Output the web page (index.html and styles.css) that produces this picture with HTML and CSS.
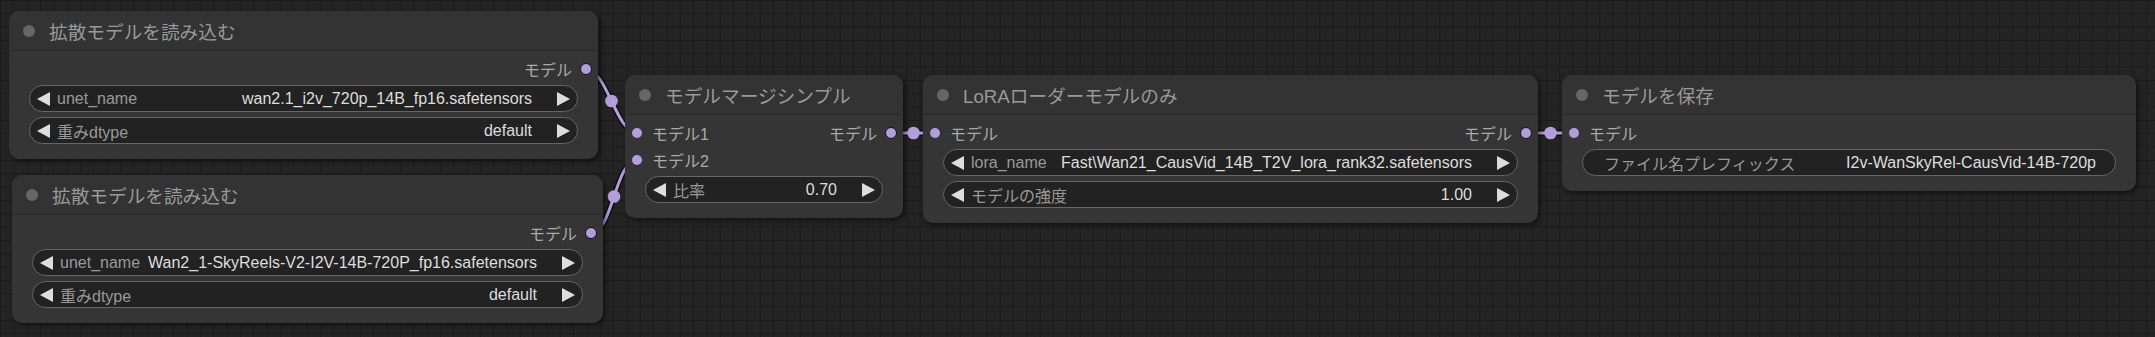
FILE: index.html
```html
<!DOCTYPE html>
<html lang="ja">
<head>
    <meta charset="UTF-8">
    <title>ComfyUI - モデルマージ</title>
    <link rel="stylesheet" href="styles.css">
</head>
<body>
<div class="canvas">
    <!-- links between nodes -->
    <svg class="links" width="2155" height="337" viewBox="0 0 2155 337">
        <g class="link-shadow">
            <path d="M586 69 C606.5 69 616.5 133 637 133"/>
            <path d="M591 233 C612.6 233 615.4 160 637 160"/>
            <path d="M891 133 L936 133"/>
            <path d="M1526.5 133 L1574.5 133"/>
        </g>
        <g class="link-line">
            <path d="M586 69 C606.5 69 616.5 133 637 133"/>
            <path d="M591 233 C612.6 233 615.4 160 637 160"/>
            <path d="M891 133 L936 133"/>
            <path d="M1526.5 133 L1574.5 133"/>
        </g>
        <g class="link-marker">
            <circle cx="611.5" cy="101" r="6.3"/>
            <circle cx="614" cy="196.5" r="6.3"/>
            <circle cx="913.5" cy="133" r="6.3"/>
            <circle cx="1550.5" cy="133" r="6.3"/>
        </g>
    </svg>

    <!-- 拡散モデルを読み込む 1 -->
    <div class="node node-load-a">
        <div class="node-title"><span class="title-dot"></span>拡散モデルを読み込む</div>
        <div class="node-body">
            <div class="slot-row">
                <span class="slot-out">モデル<i class="dot-out"></i></span>
            </div>
            <div class="widgets">
                <div class="widget">
                    <i class="arrow-l"></i>
                    <span class="w-label">unet_name</span>
                    <span class="w-value">wan2.1_i2v_720p_14B_fp16.safetensors</span>
                    <i class="arrow-r"></i>
                </div>
                <div class="widget">
                    <i class="arrow-l"></i>
                    <span class="w-label">重みdtype</span>
                    <span class="w-value">default</span>
                    <i class="arrow-r"></i>
                </div>
            </div>
        </div>
    </div>

    <!-- 拡散モデルを読み込む 2 -->
    <div class="node node-load-b">
        <div class="node-title"><span class="title-dot"></span>拡散モデルを読み込む</div>
        <div class="node-body">
            <div class="slot-row">
                <span class="slot-out">モデル<i class="dot-out"></i></span>
            </div>
            <div class="widgets">
                <div class="widget">
                    <i class="arrow-l"></i>
                    <span class="w-label">unet_name</span>
                    <span class="w-value">Wan2_1-SkyReels-V2-I2V-14B-720P_fp16.safetensors</span>
                    <i class="arrow-r"></i>
                </div>
                <div class="widget">
                    <i class="arrow-l"></i>
                    <span class="w-label">重みdtype</span>
                    <span class="w-value">default</span>
                    <i class="arrow-r"></i>
                </div>
            </div>
        </div>
    </div>

    <!-- モデルマージシンプル -->
    <div class="node node-merge">
        <div class="node-title"><span class="title-dot"></span>モデルマージシンプル</div>
        <div class="node-body">
            <div class="slot-row">
                <span class="slot-in"><i class="dot-in"></i>モデル1</span>
                <span class="slot-out">モデル<i class="dot-out"></i></span>
            </div>
            <div class="slot-row">
                <span class="slot-in"><i class="dot-in"></i>モデル2</span>
            </div>
            <div class="widgets">
                <div class="widget">
                    <i class="arrow-l"></i>
                    <span class="w-label">比率</span>
                    <span class="w-value">0.70</span>
                    <i class="arrow-r"></i>
                </div>
            </div>
        </div>
    </div>

    <!-- LoRAローダーモデルのみ -->
    <div class="node node-lora">
        <div class="node-title"><span class="title-dot"></span>LoRAローダーモデルのみ</div>
        <div class="node-body">
            <div class="slot-row">
                <span class="slot-in"><i class="dot-in"></i>モデル</span>
                <span class="slot-out">モデル<i class="dot-out"></i></span>
            </div>
            <div class="widgets">
                <div class="widget">
                    <i class="arrow-l"></i>
                    <span class="w-label">lora_name</span>
                    <span class="w-value">Fast\Wan21_CausVid_14B_T2V_lora_rank32.safetensors</span>
                    <i class="arrow-r"></i>
                </div>
                <div class="widget">
                    <i class="arrow-l"></i>
                    <span class="w-label">モデルの強度</span>
                    <span class="w-value">1.00</span>
                    <i class="arrow-r"></i>
                </div>
            </div>
        </div>
    </div>

    <!-- モデルを保存 -->
    <div class="node node-save">
        <div class="node-title"><span class="title-dot"></span>モデルを保存</div>
        <div class="node-body">
            <div class="slot-row">
                <span class="slot-in"><i class="dot-in"></i>モデル</span>
            </div>
            <div class="widgets">
                <div class="widget text-widget">
                    <span class="w-label">ファイル名プレフィックス</span>
                    <span class="w-value">I2v-WanSkyRel-CausVid-14B-720p</span>
                </div>
            </div>
        </div>
    </div>
</div>
</body>
</html>
```

FILE: styles.css
```css
body {
	margin: 0;
	background: #242424;
}
.canvas {
	position: relative;
	width: 2155px;
	height: 337px;
	overflow: hidden;
	background-color: #242424;
	background-image:
		linear-gradient(to right, #1b1b1b 1px, transparent 1px),
		linear-gradient(to bottom, #1b1b1b 1px, transparent 1px);
	background-size: 13.33px 13.33px;
	font-family: "Liberation Sans", "Noto Sans CJK JP", sans-serif;
}

/* links */
.links {
	position: absolute;
	left: 0;
	top: 0;
}
.link-shadow path {
	fill: none;
	stroke: rgba(0, 0, 0, 0.6);
	stroke-width: 6;
}
.link-line path {
	fill: none;
	stroke: #b39ddb;
	stroke-width: 3;
}
.link-marker circle {
	fill: #b39ddb;
}

/* nodes */
.node {
	position: absolute;
	background: #353535;
	border-radius: 10px;
	box-shadow: 2px 2px 5px rgba(0, 0, 0, 0.55);
}
.node-load-a { left: 9px;    top: 11px;  width: 589px; }
.node-load-b { left: 12px;   top: 175px; width: 591px; }
.node-merge  { left: 625px;  top: 75px;  width: 278px; }
.node-lora   { left: 923px;  top: 75px;  width: 615px; }
.node-save   { left: 1562px; top: 75px;  width: 574px; }

.node-title {
	height: 40px;
	box-sizing: border-box;
	display: flex;
	align-items: center;
	gap: 14px;
	padding-left: 14px;
	background: #333;
	border-radius: 10px 10px 0 0;
	border-bottom: 1px solid #2a2a2a;
	color: #999;
	font-size: 18.67px;
	white-space: nowrap;
}
.title-dot {
	width: 12px;
	height: 12px;
	border-radius: 50%;
	background: #666;
}

.node-body {
	padding: 4px 0 15px;
}
.slot-row {
	height: 27px;
	display: flex;
	align-items: center;
	padding: 0 6px 0 7px;
	color: #aaa;
	font-size: 16px;
}
.slot-in {
	display: flex;
	align-items: center;
	gap: 10px;
}
.slot-out {
	display: flex;
	align-items: center;
	gap: 8px;
	margin-left: auto;
}
.dot-in {
	width: 10px;
	height: 10px;
	border-radius: 50%;
	background: #b39ddb;
}
.dot-out {
	width: 12px;
	height: 12px;
	box-sizing: border-box;
	border: 1.5px solid #111;
	border-radius: 50%;
	background: #b39ddb;
}

/* widgets */
.widgets {
	margin-top: 3px;
	padding: 0 20px;
	display: flex;
	flex-direction: column;
	gap: 5px;
}
.widget {
	height: 27px;
	box-sizing: border-box;
	display: flex;
	align-items: center;
	padding: 0 7px;
	background: #222;
	border: 1px solid #666;
	border-radius: 14px;
	font-size: 16px;
	white-space: nowrap;
}
.arrow-l {
	width: 0;
	height: 0;
	border-top: 7px solid transparent;
	border-bottom: 7px solid transparent;
	border-right: 13px solid #ddd;
}
.arrow-r {
	width: 0;
	height: 0;
	border-top: 7px solid transparent;
	border-bottom: 7px solid transparent;
	border-left: 13px solid #ddd;
}
.w-label {
	margin-left: 7px;
	color: #999;
}
.w-value {
	margin-left: auto;
	margin-right: 25px;
	color: #ddd;
}
.text-widget {
	padding: 0 19px 0 21px;
}
.text-widget .w-label {
	margin-left: 0;
}
.text-widget .w-value {
	margin-right: 0;
}
```
